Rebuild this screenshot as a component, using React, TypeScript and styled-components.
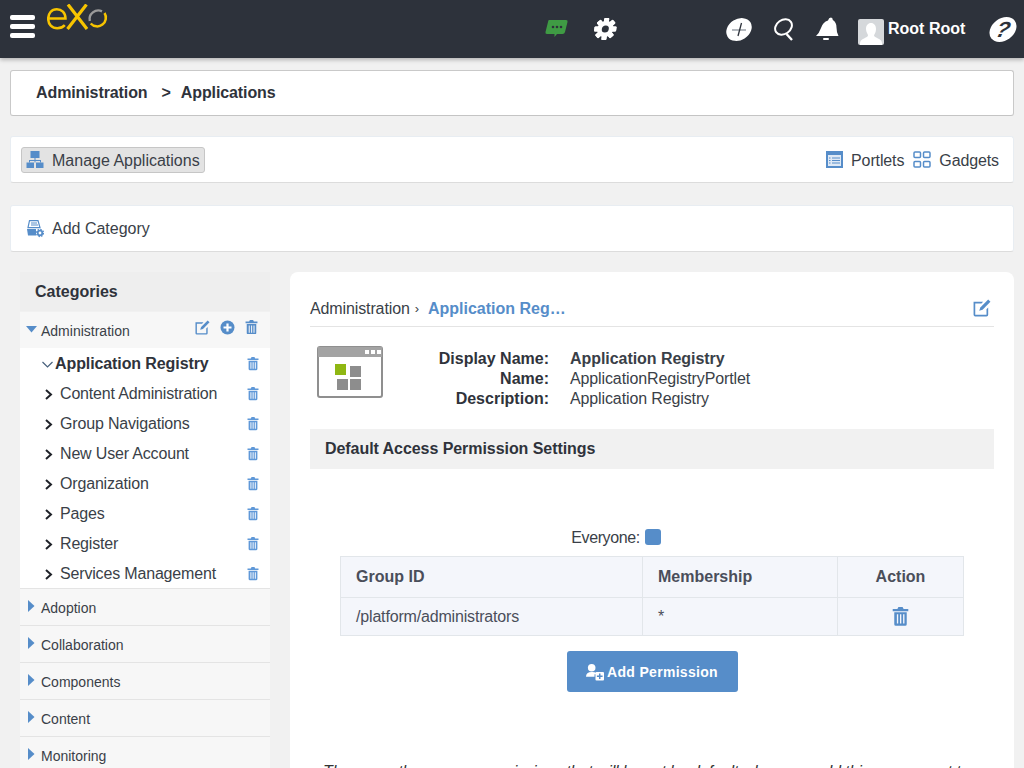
import React from 'react';
import styled, { createGlobalStyle } from 'styled-components';

const GlobalStyle = createGlobalStyle`
    html, body {
        margin: 0;
        height: 768px;
        overflow: hidden;
        background: #f1f1f1;
        color: #333;
        font-family: "Liberation Sans", Arial, sans-serif;
        font-size: 16px;
        letter-spacing: -0.12px;
    }
`;

const BLUE = '#568dc9';
const LIGHT_BLUE = '#5f98d8';

const Page = styled.div`
    width: 1024px;
    height: 768px;
    overflow: hidden;
`;

const TopBar = styled.header`
    height: 58px;
    background: #2d323b;
    box-shadow: 0 2px 4px rgba(0, 0, 0, 0.25);
    display: flex;
    position: relative;
`;

const BarLeft = styled.div`
    width: 545px;
    display: flex;
    align-items: flex-start;
    padding: 4px 0 0 10px;
    box-sizing: border-box;
`;

const Burger = styled.div`
    width: 25px;
    margin-top: 11px;
    margin-right: 12px;
    display: flex;
    flex-direction: column;
    gap: 4px;
    span {
        height: 5px;
        border-radius: 2px;
        background: #fff;
    }
`;

const BarMiddle = styled.div`
    width: 181px;
    display: flex;
    align-items: center;
    gap: 25px;
    padding-bottom: 1px;
`;

const BarRight = styled.div`
    flex: 1;
    display: flex;
    align-items: center;
`;

const RowGap = styled.div`
    width: 22px;
    flex: none;
`;

const UserName = styled.span`
    color: #fff;
    font-weight: 700;
    letter-spacing: 0;
    margin: -1px 25px 0 4px;
    white-space: nowrap;
`;

const Avatar = styled.div`
    width: 26px;
    height: 26px;
    margin: 5px 0 0 19px;
    background: #d5d8db;
    border-radius: 2px;
    overflow: hidden;
    display: flex;
`;

const HelpBadge = styled.div`
    width: 26px;
    height: 25px;
    border-radius: 50%;
    background: #fff;
    transform: skewX(-16deg);
    color: #2d323b;
    font: italic 700 22px/25px "Liberation Sans", sans-serif;
    text-align: center;
`;

const Body = styled.main`
    padding: 12px 10px 0;
`;

const Card = styled.div<{ $outlined?: boolean; $gap?: number }>`
    height: ${(p) => (p.$outlined ? 46 : 47)}px;
    box-sizing: border-box;
    background: #fff;
    border-radius: 3px;
    margin-bottom: ${(p) => p.$gap ?? 0}px;
    display: flex;
    align-items: center;
    justify-content: space-between;
    border: 1px solid ${(p) => (p.$outlined ? '#c9c9c9' : '#e8edf2')};
    border-bottom-color: ${(p) => (p.$outlined ? '#c4c4c4' : '#dcdcdc')};
    padding: 0 10px 0 ${(p) => (p.$outlined ? 25 : 10)}px;
`;

const Crumb = styled.div`
    font-weight: 700;
    color: #2f333b;
    letter-spacing: -0.1px;
    display: flex;
`;

const CrumbSep = styled.span`
    margin: 0 10px 0 14px;
`;

const ToolLabel = styled.span<{ $wide?: boolean; $flat?: boolean }>`
    color: #3a3f48;
    margin-left: 8px;
    padding-top: ${(p) => (p.$flat ? 0 : 2)}px;
    letter-spacing: ${(p) => (p.$wide ? 0 : -0.12)}px;
`;

const ToolButton = styled.div<{ $pressed?: boolean }>`
    height: 26px;
    box-sizing: border-box;
    display: flex;
    align-items: center;
    border-radius: 3px;
    padding: 0 ${(p) => (p.$pressed ? 4 : 3)}px 0 4px;
    background: ${(p) => (p.$pressed ? '#e3e3e3' : 'transparent')};
    border: 1px solid ${(p) => (p.$pressed ? '#c6c6c6' : 'transparent')};
`;

const ToolGroup = styled.div`
    display: flex;
    align-items: center;
`;

const Columns = styled.div`
    display: flex;
    padding-left: 10px;
    gap: 20px;
    align-items: flex-start;
`;

const Sidebar = styled.aside`
    width: 250px;
    flex: none;
`;

const SideTitle = styled.h3`
    margin: 0 0 1px;
    height: 39px;
    line-height: 40px;
    background: #eeeeee;
    padding-left: 15px;
    font-size: 16px;
    letter-spacing: 0;
    color: #2f333b;
`;

const CategoryRow = styled.div<{ $open?: boolean }>`
    height: ${(p) => (p.$open ? 36 : 37)}px;
    box-sizing: border-box;
    background: #f7f7f7;
    border-top: ${(p) => (p.$open ? 0 : 1)}px solid #e4e4e4;
    display: flex;
    align-items: center;
    font-size: 14px;
    letter-spacing: 0;
    color: #3a3f48;
    padding: 2px ${(p) => (p.$open ? 12 : 10)}px 0 ${(p) => (p.$open ? 6 : 8)}px;
    gap: ${(p) => (p.$open ? 4 : 6)}px;
`;

const RowSpacer = styled.div`
    flex: 1;
`;

const ActionIcons = styled.div`
    display: flex;
    gap: 10px;
    margin-bottom: 8px;
`;

const CaretBox = styled.span`
    display: flex;
    margin-top: -4px;
`;

const ItemList = styled.div`
    background: #fff;
`;

const Item = styled.div<{ $active?: boolean }>`
    height: 30px;
    box-sizing: border-box;
    display: flex;
    align-items: center;
    padding: 2px 11px 0 ${(p) => (p.$active ? 22 : 25)}px;
    font-weight: ${(p) => (p.$active ? 700 : 400)};
    letter-spacing: ${(p) => (p.$active ? -0.1 : -0.17)}px;
    color: ${(p) => (p.$active ? '#2f333b' : '#3a3f48')};
    gap: ${(p) => (p.$active ? 2 : 7)}px;
`;

const Panel = styled.section`
    flex: 1;
    height: 520px;
    background: #fff;
    border-radius: 8px 8px 0 0;
    padding: 20px 20px 0;
    box-sizing: border-box;
`;

const PanelHead = styled.div`
    height: 35px;
    box-sizing: border-box;
    border-bottom: 1px solid #e4e4e4;
    display: flex;
    align-items: center;
    padding-bottom: 1px;
    color: #3a3f48;
`;

const PanelCrumbLink = styled.span`
    color: ${BLUE};
    font-weight: 700;
    letter-spacing: 0;
    margin-left: 9px;
`;

const PanelCrumbSep = styled.span`
    font-size: 13px;
    margin-left: 5px;
`;

const PanelEdit = styled.span`
    display: flex;
    margin: 0 3px 2px 0;
`;

const InfoBlock = styled.div`
    display: flex;
    padding: 19px 0 0 7px;
    height: 82px;
    box-sizing: border-box;
`;

const InfoGrid = styled.dl`
    margin: 3px 0 0 36px;
    display: grid;
    grid-template-columns: 130px auto;
    column-gap: 21px;
    grid-auto-rows: 20px;
    line-height: 20px;
    white-space: nowrap;
    dt {
        font-weight: 700;
        text-align: right;
        color: #2f333b;
        letter-spacing: 0;
    }
    dd {
        margin: 0;
        color: #3a3f48;
    }
    strong {
        letter-spacing: -0.05px;
    }
`;

const SectionBar = styled.div`
    height: 40px;
    line-height: 39px;
    background: #f1f1f1;
    padding-left: 15px;
    font-weight: 700;
    letter-spacing: -0.06px;
    color: #2f333b;
    margin-top: 20px;
`;

const Everyone = styled.div`
    margin-top: 58px;
    height: 20px;
    display: flex;
    justify-content: center;
    align-items: center;
    gap: 5px;
    color: #3a3f48;
    letter-spacing: -0.4px;
    padding: 2px 72px 0 0;
    box-sizing: border-box;
`;

const CheckBox = styled.span`
    width: 16px;
    height: 16px;
    border-radius: 3px;
    background: ${BLUE};
    margin-top: -3px;
`;

const Table = styled.table`
    width: 623px;
    margin: 9px 0 0 30px;
    border-collapse: collapse;
    table-layout: fixed;
    background: #f4f6fb;
    color: #4a4e5a;
    th, td {
        border: 1px solid #e2e6ea;
        padding: 0 15px;
        text-align: left;
    }
    th {
        height: 40px;
        letter-spacing: 0;
    }
    td {
        height: 37px;
        letter-spacing: -0.17px;
    }
`;

const CenterCell = styled.th`
    && {
        text-align: center;
    }
`;

const CenterData = styled.td`
    && {
        text-align: center;
    }
    svg {
        display: inline-block;
        vertical-align: middle;
    }
`;

const ButtonRow = styled.div`
    display: flex;
    justify-content: center;
    margin-top: 15px;
`;

const PrimaryButton = styled.button`
    width: 171px;
    height: 41px;
    border: 0;
    border-radius: 3px;
    background: ${BLUE};
    color: #fff;
    font: 700 14px "Liberation Sans", sans-serif;
    letter-spacing: 0.3px;
    display: flex;
    align-items: center;
    justify-content: center;
    gap: 3px;
`;

const Note = styled.p`
    margin: 71px 0 0;
    padding-left: 13px;
    font-style: italic;
    white-space: nowrap;
    color: #333;
`;

function TrashIcon({ size = 13, color = BLUE }: { size?: number; color?: string }) {
    return (
        <svg width={size} height={size * 1.1} viewBox="0 0 16 18" fill={color}>
            <path d="M6 0h4l1 2h4.500v2H.5V2H5zM2 5h12v11.500a1.500 1.500 0 0 1-1.500 1.500h-9A1.500 1.500 0 0 1 2 16.500zM4.500 7v9h1.300V7zm3 0v9h1.300V7zm3 0v9h1.300V7z" fillRule="evenodd" />
        </svg>
    );
}

function Logo() {
    return (
        <svg width="62" height="26" viewBox="0 0 62 26" fill="none">
            <path d="M1.500 14.500H18.500C18.500 8.500 14.500 5.200 9.800 5.200C4.500 5.200 1.200 9.500 1.200 14.800C1.200 20.500 5 24.300 10.300 24.300C13.500 24.300 16 23.200 17.800 21.200" stroke="#f7c400" strokeWidth="2.500" />
            <path d="M21 .5L40 25M39.500 .5L20.500 25" stroke="#f7c400" strokeWidth="3.200" />
            <path d="M55 7.300A8.700 8.700 0 0 0 42.800 17" stroke="#9a9a9a" strokeWidth="2.400" />
            <path d="M43.700 19.500A8.700 8.700 0 0 0 57.500 9" stroke="#f7c400" strokeWidth="2.500" />
        </svg>
    );
}

function ChatIcon() {
    return (
        <svg width="23" height="19" viewBox="0 0 23 19">
            <path d="M4 1h17q2 0 1.500 2l-2.500 10q-.5 2-2.500 2H12l-2.500 3V15H2q-2 0-1.500-2L3 3q.3-2 1-2z" fill="#3f9b44" />
            <circle cx="8" cy="8" r="1.300" fill="#2d323b" />
            <circle cx="12" cy="8" r="1.300" fill="#2d323b" />
            <circle cx="16" cy="8" r="1.300" fill="#2d323b" />
        </svg>
    );
}

function GearIcon() {
    const teeth = [0, 45, 90, 135, 180, 225, 270, 315];
    return (
        <svg width="24" height="24" viewBox="0 0 24 24">
            <g transform="translate(2 0) skewX(-8)">
                {teeth.map((a) => (
                    <rect key={a} x="9.500" y="1" width="5" height="22" rx="1" fill="#fff" transform={`rotate(${a} 12 12)`} />
                ))}
                <circle cx="12" cy="12" r="8" fill="#fff" />
                <circle cx="12" cy="12" r="3.500" fill="#2d323b" />
            </g>
        </svg>
    );
}

function PlusBadge() {
    return (
        <svg width="26" height="25" viewBox="0 0 26 25">
            <ellipse cx="13" cy="12.500" rx="13.500" ry="10.500" transform="rotate(-32 13 12.500)" fill="#fff" />
            <path d="M6 13h14" stroke="#9aa0a8" strokeWidth="1.500" />
            <path d="M15.500 6l-3.500 13" stroke="#2d323b" strokeWidth="1.300" />
        </svg>
    );
}

function SearchIcon() {
    return (
        <svg width="20" height="23" viewBox="0 0 20 23" fill="none" stroke="#fff">
            <ellipse cx="9.500" cy="9" rx="9" ry="7" transform="rotate(-35 9.500 9)" strokeWidth="2" />
            <path d="M12.500 16L18 22" strokeWidth="2.400" />
        </svg>
    );
}

function BellIcon() {
    return (
        <svg width="23" height="25" viewBox="0 0 23 25" fill="#fff">
            <path d="M15 .5q1.800 0 1.800 2.500q3.700 2 3.700 7.500q0 5 2 8.500H0q3-2.500 5-8q1.800-6 7-7.500q.8-3 3-3z" />
            <rect x="7" y="21" width="6" height="2" rx="1" />
        </svg>
    );
}

function PersonIcon() {
    return (
        <svg width="26" height="26" viewBox="0 0 26 26" fill="#fff">
            <path d="M13 4c3 0 5 2.500 5 6s-1.500 5-2 6.500c0 1.500 5 3 7 5 1 1 1 3 1 4.500H2c0-1.500 0-3.500 1-4.500 2-2 7-3.500 7-5 0-1.500-2-3-2-6.500S10 4 13 4z" />
        </svg>
    );
}

function HierarchyIcon() {
    return (
        <svg width="18" height="18" viewBox="0 0 18 18" fill={BLUE}>
            <rect x="4.500" y="0" width="9" height="7" />
            <path d="M8.500 7h1v2H15v2.500h-1V10H9.500v1.500h-1V10H4v1.500H3V9h5.500z" />
            <rect x="0.500" y="11.500" width="7.500" height="5.500" />
            <rect x="10" y="11.500" width="7.500" height="5.500" />
        </svg>
    );
}

function CategoryIcon() {
    return (
        <svg width="18" height="18" viewBox="0 0 18 18" fill="none">
            <path d="M3.500.7h8.500l2 7H2z" stroke={BLUE} strokeWidth="1.200" />
            <path d="M5 3h6M5 5h7" stroke={BLUE} />
            <path d="M1 9h9v6.500H2z" fill={BLUE} />
            <circle cx="14" cy="13" r="2.300" stroke={BLUE} strokeWidth="1.800" />
            <circle cx="14" cy="13" r="3.600" stroke={BLUE} strokeWidth="1.200" strokeDasharray="1.500 1.300" />
        </svg>
    );
}

function PortletIcon() {
    return (
        <svg width="17" height="17" viewBox="0 0 17 17">
            <rect width="17" height="17" fill={BLUE} />
            <rect x="2" y="4" width="13" height="11" fill="#dfe9f5" />
            <path d="M3 7h1.500M3 9.500h1.500M3 12h1.500M6 7h8M6 9.500h8M6 12h8" stroke={BLUE} />
        </svg>
    );
}

function GadgetIcon() {
    return (
        <svg width="18" height="17" viewBox="0 0 18 17" fill="none" stroke={BLUE} strokeWidth="1.500">
            <rect x="1" y="1" width="6.500" height="5.500" rx="1" />
            <rect x="10.500" y="1" width="6.500" height="5.500" rx="1" />
            <rect x="1" y="10.500" width="6.500" height="5.500" rx="1" />
            <rect x="10.500" y="10.500" width="6.500" height="5.500" rx="1" />
        </svg>
    );
}

function EditIcon({ size = 15 }: { size?: number }) {
    return (
        <svg width={size} height={size} viewBox="0 0 16 16" fill={BLUE}>
            <path d="M.5 2.500H9L7.500 4H2v10h10V9l1.500-1.500V14a1.500 1.500 0 0 1-1.500 1.500H2A1.500 1.500 0 0 1 .5 14z" />
            <path d="M13.500.5L15.500 2.500 8.500 9.500 5.500 10.500 6.500 7.500z" />
        </svg>
    );
}

function PlusCircleIcon() {
    return (
        <svg width="15" height="15" viewBox="0 0 15 15">
            <circle cx="7.500" cy="7.500" r="7" fill={BLUE} />
            <path d="M7.500 3.500v8M3.500 7.500h8" stroke="#fff" strokeWidth="2.200" />
        </svg>
    );
}

function TriangleIcon({ down }: { down?: boolean }) {
    return down ? (
        <svg width="11" height="7" viewBox="0 0 11 7">
            <path d="M0 0h11L5.500 6.500z" fill={BLUE} />
        </svg>
    ) : (
        <svg width="7" height="12" viewBox="0 0 7 12">
            <path d="M0 0l6.500 6L0 12z" fill={BLUE} />
        </svg>
    );
}

function ChevronIcon({ open }: { open?: boolean }) {
    return open ? (
        <svg width="11" height="7" viewBox="0 0 11 7" fill="none">
            <path d="M.5 1l5 5 5-5" stroke="#47607c" strokeWidth="1.200" />
        </svg>
    ) : (
        <svg width="8" height="11" viewBox="0 0 8 11" fill="none">
            <path d="M1 1l5 4.500L1 10" stroke="#1f2229" strokeWidth="2" />
        </svg>
    );
}

function AppIcon() {
    return (
        <svg width="66" height="52" viewBox="0 0 66 52">
            <rect x="1" y="1" width="64" height="50" rx="2" fill="#fff" stroke="#8f8f8f" strokeWidth="2" />
            <rect x="1" y="1" width="64" height="10" fill="#a3a3a3" />
            <rect x="48" y="4" width="4" height="4" fill="#fff" />
            <rect x="54" y="4" width="4" height="4" fill="#fff" />
            <rect x="60" y="4" width="4" height="4" fill="#fff" />
            <rect x="18" y="18" width="11" height="11" fill="#8fb713" />
            <rect x="33" y="20" width="11" height="11" fill="#8d8d8d" />
            <rect x="20" y="33" width="11" height="11" fill="#8d8d8d" />
            <rect x="33" y="33" width="11" height="11" fill="#8d8d8d" />
        </svg>
    );
}

function AddUserIcon() {
    return (
        <svg width="18" height="18" viewBox="0 0 19 18" fill="#fff">
            <circle cx="6" cy="4.500" r="4" />
            <path d="M0 14c0-3 2-5 6-5s5 1 5.500 2.500H9v2.500z" />
            <rect x="10" y="9" width="9" height="9" rx="1" />
            <path d="M14.500 10.500v6M11.500 13.500h6" stroke={BLUE} strokeWidth="1.600" />
        </svg>
    );
}

const SUB_ITEMS = [
    'Content Administration',
    'Group Navigations',
    'New User Account',
    'Organization',
    'Pages',
    'Register',
    'Services Management',
];

const OTHER_CATEGORIES = ['Adoption', 'Collaboration', 'Components', 'Content', 'Monitoring'];

export default function App() {
    return (
        <Page>
            <GlobalStyle />
            <TopBar>
                <BarLeft>
                    <Burger>
                        <span />
                        <span />
                        <span />
                    </Burger>
                    <Logo />
                </BarLeft>
                <BarMiddle>
                    <ChatIcon />
                    <GearIcon />
                </BarMiddle>
                <BarRight>
                    <PlusBadge />
                    <RowGap />
                    <SearchIcon />
                    <RowGap />
                    <BellIcon />
                    <Avatar>
                        <PersonIcon />
                    </Avatar>
                    <UserName>Root Root</UserName>
                    <HelpBadge>?</HelpBadge>
                </BarRight>
            </TopBar>
            <Body>
                <Card $outlined $gap={20}>
                    <Crumb>
                        <span>Administration</span>
                        <CrumbSep>&gt;</CrumbSep>
                        <span>Applications</span>
                    </Crumb>
                </Card>
                <Card $gap={22}>
                    <ToolButton $pressed>
                        <HierarchyIcon />
                        <ToolLabel $wide>Manage Applications</ToolLabel>
                    </ToolButton>
                    <ToolGroup>
                        <ToolButton>
                            <PortletIcon />
                            <ToolLabel>Portlets</ToolLabel>
                        </ToolButton>
                        <ToolButton>
                            <GadgetIcon />
                            <ToolLabel>Gadgets</ToolLabel>
                        </ToolButton>
                    </ToolGroup>
                </Card>
                <Card $gap={20}>
                    <ToolButton>
                        <CategoryIcon />
                        <ToolLabel $wide $flat>Add Category</ToolLabel>
                    </ToolButton>
                </Card>
                <Columns>
                    <Sidebar>
                        <SideTitle>Categories</SideTitle>
                        <CategoryRow $open>
                            <CaretBox>
                                <TriangleIcon down />
                            </CaretBox>
                            Administration
                            <RowSpacer />
                            <ActionIcons>
                                <EditIcon />
                                <PlusCircleIcon />
                                <TrashIcon />
                            </ActionIcons>
                        </CategoryRow>
                        <ItemList>
                            <Item $active>
                                <ChevronIcon open />
                                Application Registry
                                <RowSpacer />
                                <TrashIcon size={12} color={LIGHT_BLUE} />
                            </Item>
                            {SUB_ITEMS.map((name) => (
                                <Item key={name}>
                                    <ChevronIcon />
                                    {name}
                                    <RowSpacer />
                                    <TrashIcon size={12} color={LIGHT_BLUE} />
                                </Item>
                            ))}
                        </ItemList>
                        {OTHER_CATEGORIES.map((name) => (
                            <CategoryRow key={name}>
                                <CaretBox>
                                    <TriangleIcon />
                                </CaretBox>
                                {name}
                            </CategoryRow>
                        ))}
                    </Sidebar>
                    <Panel>
                        <PanelHead>
                            Administration
                            <PanelCrumbSep>›</PanelCrumbSep>
                            <PanelCrumbLink>Application Reg…</PanelCrumbLink>
                            <RowSpacer />
                            <PanelEdit>
                                <EditIcon size={18} />
                            </PanelEdit>
                        </PanelHead>
                        <InfoBlock>
                            <AppIcon />
                            <InfoGrid>
                                <dt>Display Name:</dt>
                                <dd>
                                    <strong>Application Registry</strong>
                                </dd>
                                <dt>Name:</dt>
                                <dd>ApplicationRegistryPortlet</dd>
                                <dt>Description:</dt>
                                <dd>Application Registry</dd>
                            </InfoGrid>
                        </InfoBlock>
                        <SectionBar>Default Access Permission Settings</SectionBar>
                        <Everyone>
                            Everyone:
                            <CheckBox />
                        </Everyone>
                        <Table>
                            <colgroup>
                                <col width="302" />
                                <col width="195" />
                                <col width="126" />
                            </colgroup>
                            <thead>
                                <tr>
                                    <th>Group ID</th>
                                    <th>Membership</th>
                                    <CenterCell>Action</CenterCell>
                                </tr>
                            </thead>
                            <tbody>
                                <tr>
                                    <td>/platform/administrators</td>
                                    <td>*</td>
                                    <CenterData>
                                        <TrashIcon size={17} />
                                    </CenterData>
                                </tr>
                            </tbody>
                        </Table>
                        <ButtonRow>
                            <PrimaryButton>
                                <AddUserIcon />
                                Add Permission
                            </PrimaryButton>
                        </ButtonRow>
                        <Note>These are the access permissions that will be set by default when you add this component to</Note>
                    </Panel>
                </Columns>
            </Body>
        </Page>
    );
}
